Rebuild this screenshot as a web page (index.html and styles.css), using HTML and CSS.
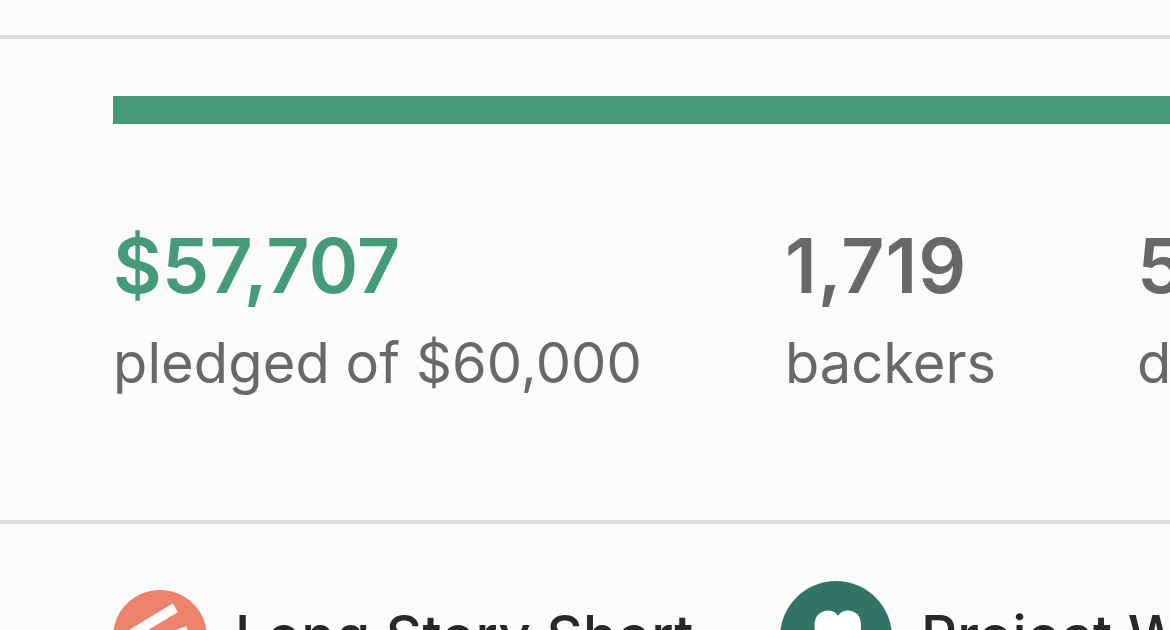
FILE: index.html
```html
<!DOCTYPE html>
<html lang="en">
<head>
    <meta charset="UTF-8">
    <meta name="viewport" content="width=device-width, initial-scale=1.0">
    <title>Project Stats</title>
    <link rel="stylesheet" href="styles.css">
</head>
<body>
    <div class="page">
        <div class="top-space"></div>
        <section class="funding">
            <div class="progress-bar"></div>
            <div class="stats">
                <div class="stat pledged">
                    <div class="value">$57,707</div>
                    <div class="label">pledged of $60,000</div>
                </div>
                <div class="stat backers">
                    <div class="value">1,719</div>
                    <div class="label">backers</div>
                </div>
                <div class="stat days">
                    <div class="value">5</div>
                    <div class="label">d</div>
                </div>
            </div>
        </section>
        <section class="details">
            <div class="creator">
                <svg class="avatar" viewBox="0 0 94 94">
                    <circle cx="47" cy="47" r="47" fill="#ee836b"/>
                    <path d="M62.3 17.7L10 49.5M75 41L20 60" stroke="#fff" stroke-width="10"/>
                </svg>
                <span class="name">Long Story Short</span>
            </div>
            <div class="badge">
                <svg class="love" viewBox="0 0 112 112">
                    <circle cx="56" cy="56" r="56" fill="#317365"/>
                    <path d="M58 34.7C54 28.5 46 28.5 41 31.5C36 34.5 34.5 39 34.5 45C34.5 60 46 66 58 80C70 66 81 60 81 45C81 39 80 34.5 75 31.5C70 28.5 62 28.5 58 34.7Z" fill="#fff"/>
                </svg>
                <span class="name">Project W</span>
            </div>
        </section>
    </div>
</body>
</html>
```

FILE: styles.css
```css
body {
    font-family: Inter, sans-serif;
    margin: 0;
    background-color: #fbfbfb;
    color: #68686a;
}
.page {
    height: 630px;
    overflow: hidden;
}
.top-space {
    height: 35px;
}
.funding {
    box-sizing: border-box;
    height: 489px;
    padding: 57px 0 0 113px;
    border-top: 4px solid #dcdcdc;
    border-bottom: 4px solid #dcdcdc;
}
.progress-bar {
    height: 28px;
    background-color: #459b77;
}
.stats {
    display: flex;
    padding-top: 95px;
    white-space: nowrap;
}
.stat {
    flex: none;
}
.pledged {
    width: 672px;
}
.backers {
    width: 352px;
}
.value {
    font-size: 75px;
    font-weight: 600;
    line-height: 94px;
    letter-spacing: 0.3px;
}
.pledged .value {
    color: #459b77;
}
.backers .value {
    letter-spacing: 1.1px;
}
.label {
    padding-top: 2px;
    font-size: 56px;
    line-height: 96px;
}
.pledged .label {
    letter-spacing: 0.1px;
}
.details {
    display: flex;
    align-items: center;
    height: 112px;
    padding: 57px 0 0 113px;
    font-size: 56px;
    color: #282828;
    white-space: nowrap;
}
.creator, .badge {
    display: flex;
    align-items: center;
    flex: none;
}
.creator {
    width: 667px;
}
.avatar {
    width: 94px;
    height: 94px;
    margin-right: 28px;
}
.love {
    width: 112px;
    height: 112px;
    margin-right: 29px;
}
.name {
    padding-bottom: 2px;
    font-weight: 500;
    letter-spacing: 0.4px;
}
```
